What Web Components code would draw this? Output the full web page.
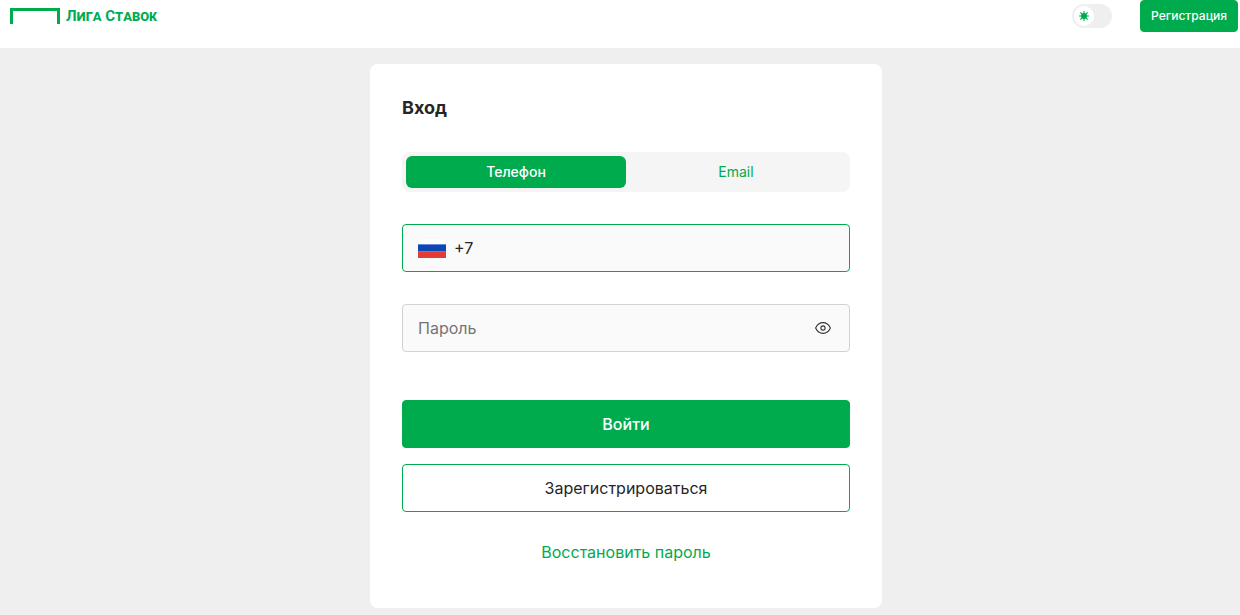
<!DOCTYPE html>
<html lang="ru">
<head>
<meta charset="utf-8">
<meta name="viewport" content="width=device-width, initial-scale=1">
<title>Лига Ставок — Вход</title>
<style>
  html { background: #efefef; }
  body {
    margin: 0;
    font-family: Inter, Roboto, "Liberation Sans", sans-serif;
    font-size: 16px;
    line-height: 24px;
    color: #262626;
    --green: #00ab4e;
    --page: #efefef;
    --field: #fafafa;
    --ink: #262626;
  }
</style>
</head>
<body>
<login-page></login-page>

<script>
class BaseElement extends HTMLElement {
  constructor() {
    super();
    this.attachShadow({ mode: 'open' }).innerHTML =
      '<style>*{box-sizing:border-box}</style>' + this.constructor.markup;
  }
}

customElements.define('brand-logo', class extends BaseElement {
  static markup = `
    <style>
      :host { display: block; }
      a { display: flex; align-items: center; gap: 6px; color: var(--green); text-decoration: none; }
      svg { display: block; }
      span {
        font: bold 15px/32px Roboto, "Liberation Sans", sans-serif;
        font-variant-caps: small-caps;
        white-space: nowrap;
      }
    </style>
    <a href="#">
      <svg width="50" height="16" viewBox="0 0 50 16" aria-hidden="true"><path d="M0 0H50V16H47V3H3V16H0Z" fill="currentColor"/></svg>
      <span>Лига Ставок</span>
    </a>`;
});

customElements.define('theme-switch', class extends BaseElement {
  static markup = `
    <style>
      :host { display: block; }
      label { display: flex; width: 40px; height: 24px; padding: 2px; border-radius: 12px; background: var(--page); cursor: pointer; }
      input { appearance: none; position: absolute; margin: 0; width: 1px; height: 1px; }
      span { display: grid; place-items: center; width: 20px; height: 20px; border-radius: 50%; background: #fff; }
      input:checked + span { margin-left: 16px; }
    </style>
    <label>
      <input type="checkbox" role="switch" aria-label="Тёмная тема">
      <span><svg width="10" height="10" viewBox="0 0 10 10" aria-hidden="true">
        <circle cx="5" cy="5" r="3" fill="#00ab4e"/>
        <path d="M5 0V10M0 5H10M1.3 1.3L8.7 8.7M8.7 1.3L1.3 8.7" stroke="#00ab4e" stroke-width="1.1"/>
      </svg></span>
    </label>`;
});

customElements.define('ui-button', class extends BaseElement {
  static markup = `
    <style>
      :host { display: block; }
      button {
        display: block; width: 100%; height: 48px; padding: 0 10px; margin: 0;
        border: 1px solid var(--green); border-radius: 4px;
        background: var(--green); color: #fff;
        font: 500 16px/24px Inter, Roboto, sans-serif; cursor: pointer; white-space: nowrap;
      }
      :host([variant="outline"]) button { background: #fff; color: var(--ink); font-weight: 400; }
      :host([size="small"]) button { height: 32px; font-size: 12px; line-height: 16px; }
    </style>
    <button type="button"><slot></slot></button>`;
});

customElements.define('site-header', class extends BaseElement {
  static markup = `
    <style>
      :host { display: flex; align-items: flex-start; justify-content: space-between; height: 48px; padding: 0 2px 0 10px; background: #fff; }
      .actions { display: flex; align-items: center; gap: 28px; }
    </style>
    <brand-logo></brand-logo>
    <div class="actions">
      <theme-switch></theme-switch>
      <ui-button size="small">Регистрация</ui-button>
    </div>`;
});

customElements.define('login-tabs', class extends BaseElement {
  static markup = `
    <style>
      :host { display: block; }
      div { display: grid; grid-template-columns: 1fr 1fr; padding: 4px; border-radius: 8px; background: #f5f5f5; }
      button {
        height: 32px; padding: 0; border: 0; border-radius: 6px; background: none; color: var(--green);
        font: 400 14px/20px Inter, Roboto, sans-serif; cursor: pointer;
      }
      button[aria-selected="true"] { background: var(--green); color: #fff; font-weight: 500; }
    </style>
    <div role="tablist">
      <button type="button" role="tab" aria-selected="true">Телефон</button>
      <button type="button" role="tab" aria-selected="false">Email</button>
    </div>`;
  connectedCallback() {
    const tabs = [...this.shadowRoot.querySelectorAll('button')];
    tabs.forEach(tab => tab.addEventListener('click', () =>
      tabs.forEach(t => t.setAttribute('aria-selected', String(t === tab)))));
  }
});

const fieldStyle = `
  <style>
    :host { display: block; }
    label { display: flex; align-items: center; gap: 8px; height: 48px; padding: 0 15px; border: 1px solid #d2d2d2; border-radius: 4px; background: var(--field); }
    input { flex: 1; min-width: 0; height: 24px; padding: 0; border: 0; outline: 0; background: none; color: var(--ink); font: 400 16px/24px Inter, Roboto, sans-serif; }
    input::placeholder { color: #757575; opacity: 1; }
    svg { display: block; }
  </style>`;

customElements.define('phone-field', class extends BaseElement {
  static markup = fieldStyle + `
    <style>label { border-color: var(--green); }</style>
    <label>
      <svg width="28" height="20" viewBox="0 0 28 20" aria-hidden="true">
        <rect y="0.6" width="28" height="19" fill="#f5f5f5"/>
        <rect x="0.5" y="1.2" width="27" height="5.2" fill="#fff"/>
        <rect y="6.4" width="28" height="6.8" fill="#0c47b7"/>
        <rect y="13.2" width="28" height="6.8" fill="#e53b35"/>
      </svg>
      <input type="tel" value="+7" aria-label="Телефон" autocomplete="tel">
    </label>`;
});

customElements.define('password-field', class extends BaseElement {
  static markup = fieldStyle + `
    <style>
      label { padding-right: 14px; }
      button { display: grid; place-items: center; width: 24px; height: 24px; padding: 0; border: 0; background: none; color: #333; cursor: pointer; }
    </style>
    <label>
      <input type="password" placeholder="Пароль" aria-label="Пароль" autocomplete="current-password">
      <button type="button" aria-label="Показать пароль">
        <svg width="16" height="12" viewBox="0 0 16 12" fill="none" stroke="currentColor" stroke-width="1.1" aria-hidden="true">
          <path d="M.6 6C2.2 2.5 4.8.6 8 .6S13.8 2.5 15.4 6C13.8 9.5 11.2 11.4 8 11.4S2.2 9.5.6 6Z"/>
          <circle cx="8" cy="6" r="2.1"/>
        </svg>
      </button>
    </label>`;
  connectedCallback() {
    const input = this.shadowRoot.querySelector('input');
    this.shadowRoot.querySelector('button').addEventListener('click', () => {
      input.type = input.type === 'password' ? 'text' : 'password';
    });
  }
});

customElements.define('login-card', class extends BaseElement {
  static markup = `
    <style>
      :host { display: block; width: 100%; max-width: 512px; padding: 32px; border-radius: 8px; background: #fff; }
      form { display: flex; flex-direction: column; gap: 32px; }
      h1 { margin: 0; font-size: 18px; line-height: 24px; font-weight: 700; }
      .actions { display: grid; gap: 16px; padding-top: 16px; }
      .foot { display: grid; justify-items: center; padding-bottom: 12px; }
      .foot a { color: var(--green); text-decoration: none; }
      .submit { display: grid; gap: 28px; }
    </style>
    <form>
      <h1>Вход</h1>
      <login-tabs></login-tabs>
      <phone-field></phone-field>
      <password-field></password-field>
      <div class="submit">
        <div class="actions">
          <ui-button>Войти</ui-button>
          <ui-button variant="outline">Зарегистрироваться</ui-button>
        </div>
        <div class="foot"><a href="#">Восстановить пароль</a></div>
      </div>
    </form>`;
});

customElements.define('login-page', class extends BaseElement {
  static markup = `
    <style>
      :host { display: block; }
      main { display: flex; justify-content: center; padding: 16px 0 0 12px; }
    </style>
    <site-header></site-header>
    <main><login-card></login-card></main>`;
});
</script>
</body>
</html>
